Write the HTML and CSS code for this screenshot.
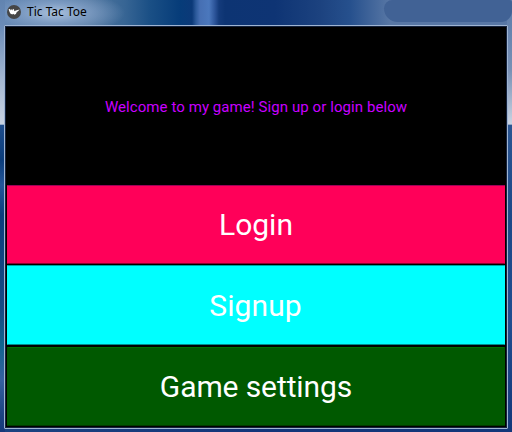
FILE: index.html
```
<!DOCTYPE html>
<html lang="en">
<head>
<meta charset="utf-8">
<title>Tic Tac Toe</title>
<link rel="stylesheet" href="styles.css">
</head>
<body>
<div class="window">
  <header class="titlebar">
    <svg class="app-icon" viewBox="0 0 14 14">
      <circle cx="7" cy="7" r="7" fill="#454545"/>
      <path d="M1.6 4.2 3 4 3.9 5.6 4.3 4 5.3 5.4 6 3.8 7 4.4 7.4 6.2 8.8 5.5 12.6 4.5 11 6.3 9.8 6.9 8.9 9 7.3 9.7 6.6 8.8 5.9 9.5 5 9 4 9.3 2.8 7.6Z" fill="#fff"/>
    </svg>
    <span class="title">Tic Tac Toe</span>
    <span class="controls"></span>
  </header>
  <main class="client">
    <p class="welcome">Welcome to my game! Sign up or login below</p>
    <button class="btn login">Login</button>
    <button class="btn signup">Signup</button>
    <button class="btn settings">Game settings</button>
  </main>
</div>
</body>
</html>
```
FILE: styles.css
```
* { box-sizing: border-box; }
body { margin: 0; font-family: Roboto, sans-serif; }
.window {
  width: 512px;
  height: 432px;
  display: flex;
  flex-direction: column;
  padding: 0 4px 3px;
  background:
    linear-gradient(#5d7cab 0, #6482ae 26px, #7890b5 70px, #c9d3e2 124px, transparent 125px) right 0 top 0 / 5px 126px no-repeat,
    linear-gradient(#6284b0 0, #6b8cb8 26px, #a5b8d2 80px, #c9d3e2 124px, transparent 125px) 0 0 / 5px 126px no-repeat,
    linear-gradient(transparent 125px, #1e4d8c 125px, #0b3d7c 160px, #24569a 185px, #0b3d7c 215px, #174b85 310px, #10658f 345px, #3560a0 380px, #1b4381 415px, #16387a 432px) 0 0 / 5px 432px no-repeat,
    linear-gradient(transparent 125px, #2a5592 125px, #1c4888 220px, #204d90 320px, #12377a 432px) right top / 5px 432px no-repeat,
    linear-gradient(90deg, #1b4381, #12357a 50%, #12377a) 0 100% / 100% 4px no-repeat,
    radial-gradient(ellipse 70px 22px at 55px 13px, #a9c0dc 0, #86a3c9cc 45%, #50769f00 100%),
    linear-gradient(90deg, #5f83b1 0, #50769f 90px, #376594 125px, #1a4f85 150px, #063c79 180px, #0b3978 192px, #2c5a9b 196px, #466fb3 200px, #4b78bd 209px, #2b5398 215px, #143b7b 219px, #0d3473 225px, #0e3474 275px, #1c427f 320px, #26508d 350px, #5877a5 390px, #5877a5 512px);
}
.titlebar {
  height: 25px;
  flex: none;
  display: flex;
  align-items: flex-start;
}
.app-icon { width: 14px; height: 14px; margin: 5px 0 0 3px; }
.title {
  margin-left: 6px;
  padding-top: 4px;
  font: 12px/16px "Noto Sans", sans-serif;
  color: #000;
}
.controls {
  width: 128px;
  height: 22px;
  margin: 0 -4px 0 auto;
  border-radius: 9px 3px 12px 15px;
  background: #416295;
}
.client {
  flex: 1;
  display: grid;
  grid-template-rows: 159px 79px 79px 79px;
  row-gap: 2px;
  padding: 0 2px;
  border: 1px solid #9fb4d2;
  border-radius: 1px;
  background: #000;
  box-shadow: inset 0 0 0 1px #14223c;
}
.welcome {
  margin: 0;
  display: flex;
  align-items: center;
  justify-content: center;
  padding-top: 2px;
  font-size: 15px;
  letter-spacing: 0.075px;
  color: #c800ff;
}
.btn {
  margin: -2px 0 2px;
  padding: 0;
  border: 1px solid;
  border-radius: 1px;
  font: 30px/36px Roboto, sans-serif;
  color: #fff;
}
.login { background: #ff0059; border-color: #a00058 #ff0059 #8c0031; }
.signup {
  margin: -3px 0 2px;
  padding: 1px 1px 0 0;
  letter-spacing: 0.1px;
  background: #0ff;
  border-color: #009f9f #0ff #008b8b;
}
.settings { letter-spacing: -0.1px; background: #005900; border-color: #007000 #005900 #003a00; }
```
